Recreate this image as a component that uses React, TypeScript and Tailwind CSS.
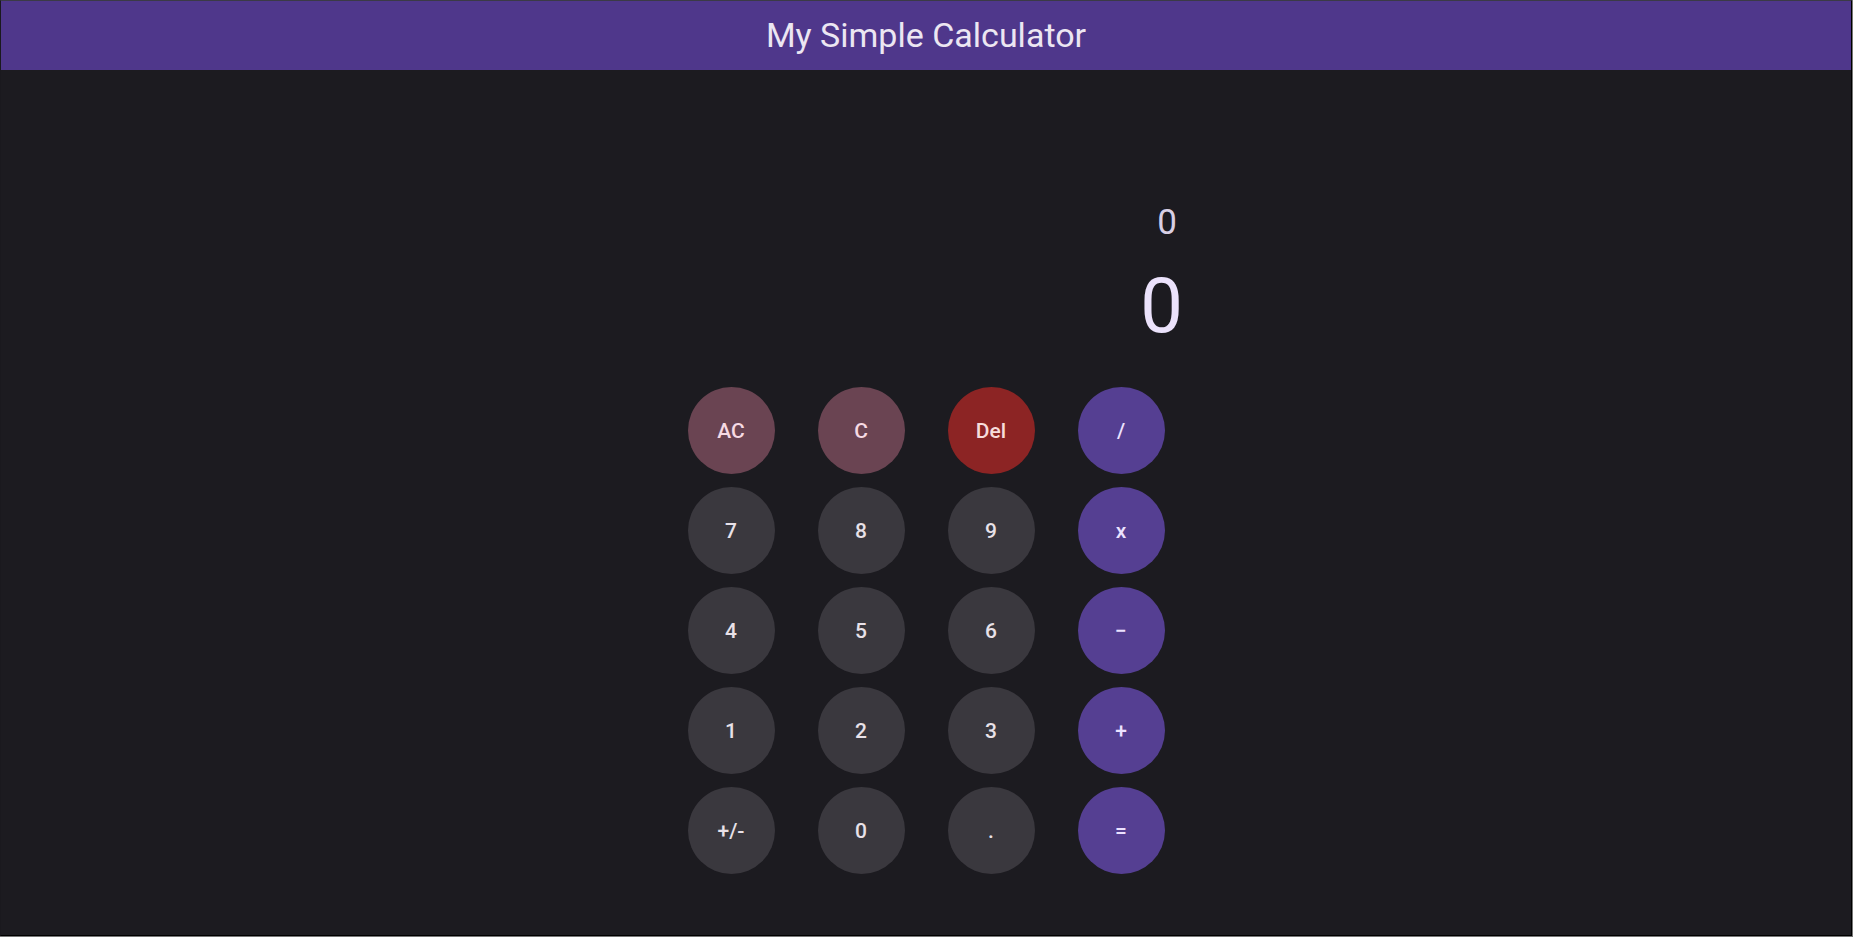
import React from "react";

type Key = {
  label: string;
  kind: "clear" | "del" | "num" | "op";
};

const KEYS: Key[] = [
  { label: "AC", kind: "clear" },
  { label: "C", kind: "clear" },
  { label: "Del", kind: "del" },
  { label: "/", kind: "op" },
  { label: "7", kind: "num" },
  { label: "8", kind: "num" },
  { label: "9", kind: "num" },
  { label: "x", kind: "op" },
  { label: "4", kind: "num" },
  { label: "5", kind: "num" },
  { label: "6", kind: "num" },
  { label: "\u2212", kind: "op" },
  { label: "1", kind: "num" },
  { label: "2", kind: "num" },
  { label: "3", kind: "num" },
  { label: "+", kind: "op" },
  { label: "+/-", kind: "num" },
  { label: "0", kind: "num" },
  { label: ".", kind: "num" },
  { label: "=", kind: "op" },
];

const keyStyle = (kind: Key["kind"]) => {
  switch (kind) {
    case "clear":
      return "bg-[#6a4452] text-[#f6dae3]";
    case "del":
      return "bg-[#8c2424] text-[#f7dcdb]";
    case "op":
      return "bg-[#553f92] text-[#ece2ff]";
    default:
      return "bg-[#3a383e] text-[#e8e1e8]";
  }
};

export default function App() {
  return (
    <div className="h-[937px] w-full bg-[#777777] pr-px pb-px font-['Roboto',sans-serif]">
      <div className="flex h-full flex-col border-t border-l border-r border-b border-t-[#3b3a46] border-l-[#1a191e] border-r-black border-b-black bg-[#1c1b20]">
        <header className="flex h-[69px] shrink-0 items-center justify-center bg-[#4f378b] pb-[2px]">
          <h1 className="text-[34px] leading-none font-normal text-[#ece6f2]">
            My Simple Calculator
          </h1>
        </header>

        <main className="mx-auto w-[514px] pt-[135px]">
          <div className="flex flex-col items-end">
            <p className="pr-[6px] text-[35px] leading-[35px] text-[#d8cfe4]">
              0
            </p>
            <p className="mt-[28px] text-[76px] leading-[76px] text-[#ebe2fb]">
              0
            </p>
          </div>

          <div className="mx-auto mt-[43px] grid w-[477px] grid-cols-4 gap-x-[43px] gap-y-[13px]">
            {KEYS.map((k) => (
              <button
                key={k.label}
                className={`flex h-[87px] w-[87px] items-center justify-center rounded-full pt-[2px] text-[21px] font-medium ${keyStyle(
                  k.kind,
                )}`}
              >
                {k.label}
              </button>
            ))}
          </div>
        </main>
      </div>
    </div>
  );
}
